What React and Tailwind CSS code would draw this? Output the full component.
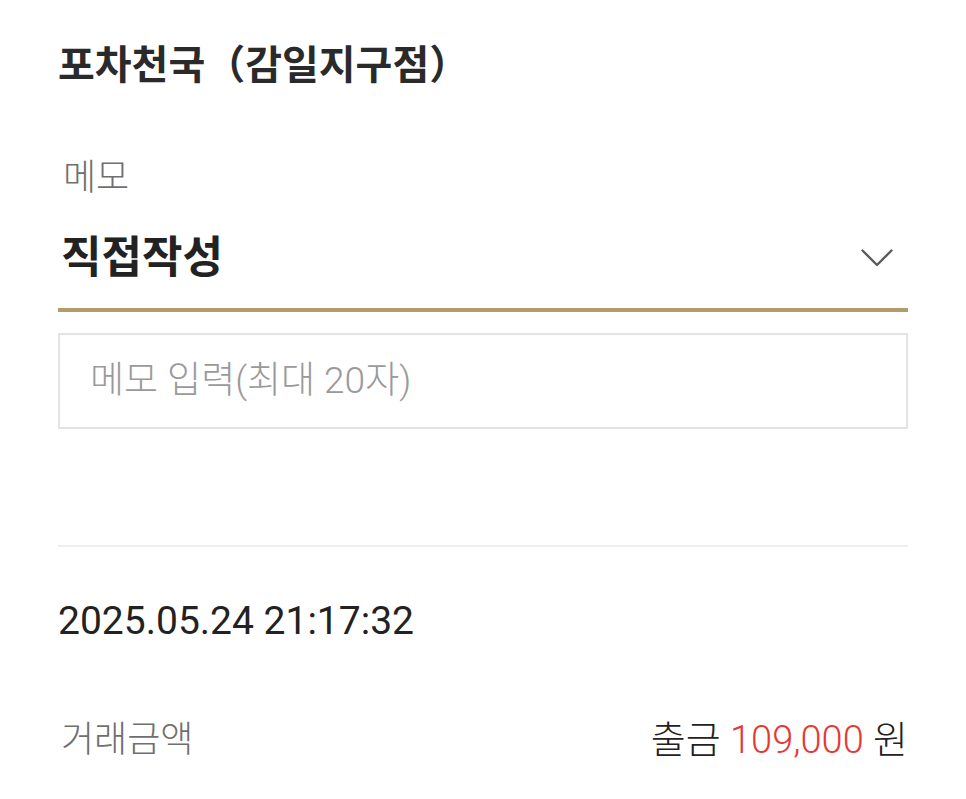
export default function App() {
  return (
    <div className="min-h-screen bg-white px-[58px] text-[#222222]" style={{ fontFamily: 'Roboto, "Noto Sans CJK KR", sans-serif' }}>
      <h1 className="pt-[40px] text-[40px] font-bold leading-[52px] text-[#2a2a2a]">포차천국（감일지구점）</h1>

      <div className="mt-[64px]">
        <p className="pl-[5px] text-[36px] font-light leading-[44px] text-[#6f6f6f]">메모</p>
        <div className="mt-[32px] flex items-center justify-between border-b-4 border-[#b29c69] pb-[24px]">
          <span className="pl-[3px] text-[44px] font-bold leading-[52px]">직접작성</span>
          <svg width="32" height="18" viewBox="0 0 32 18" fill="none" className="mr-[15px] text-[#5a5a5a]">
            <polyline points="1.5,1.5 16,16 30.5,1.5" stroke="currentColor" strokeWidth="2.4" strokeLinecap="round" strokeLinejoin="round" />
          </svg>
        </div>
        <div className="mt-[21px] flex h-[96px] items-center border-2 border-[#e3e3e3] px-[30px]">
          <span className="text-[37px] font-light text-[#9a9a9a]">메모 입력(최대 20자)</span>
        </div>
      </div>

      <div className="mt-[116px] h-[2px] bg-[#eeeeee]" />

      <p className="mt-[50px] text-[39px] leading-[48px] text-[#222222]">2025.05.24 21:17:32</p>

      <div className="mt-[71px] flex h-[48px] items-center justify-between">
        <span className="pl-[3px] text-[36px] font-light text-[#6f6f6f]">거래금액</span>
        <span className="text-[38px] font-light text-[#222222]">
          출금 <span className="text-[#e53935]">109,000</span> 원
        </span>
      </div>
    </div>
  );
}
